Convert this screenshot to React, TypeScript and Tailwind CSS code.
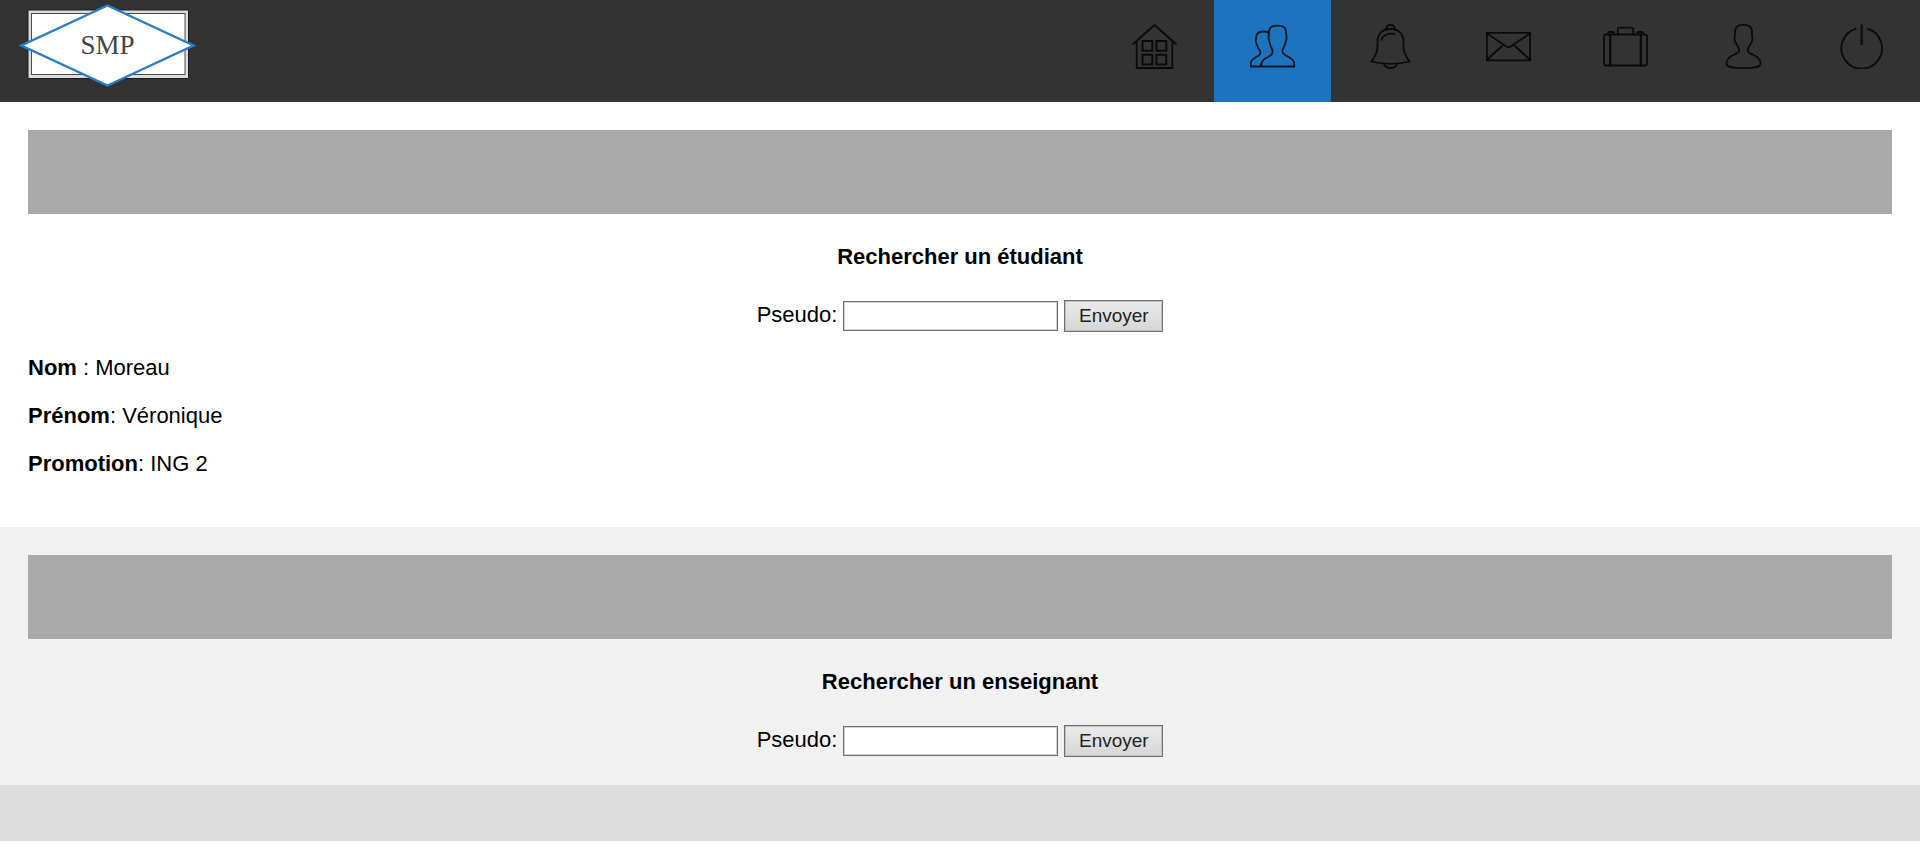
import type { ReactNode } from "react";

function Icon({ children }: { children: ReactNode }) {
  return (
    <svg
      viewBox="0 0 45 45"
      className="h-[45px] w-[45px]"
      fill="none"
      stroke="#000"
      strokeOpacity={0.8}
      strokeWidth={1.8}
      aria-hidden="true"
    >
      {children}
    </svg>
  );
}

const navItems: { label: string; active?: boolean; icon: ReactNode }[] = [
  {
    label: "Accueil",
    icon: (
      <Icon>
        <path d="M.5 20.5 22.5 1l22 19.5M4.7 17v27h35.6V17" />
        <path
          strokeWidth={2}
          d="M10.5 17h9.8v9.8h-9.8zM24.5 17h9.8v9.8h-9.8zM10.5 30.8h9.8v9.8h-9.8zM24.5 30.8h9.8v9.8h-9.8z"
        />
      </Icon>
    ),
  },
  {
    label: "Recherche",
    active: true,
    icon: (
      <Icon>
        <path d="M.8 42.300V39.500C.8 32.500 10.500 33.500 10.500 28.500c0-2.300-3.200-4-3.500-8-2-2.500-1-3-.6-8.500C6.900 8.500 10 7.500 14 7.500c2 0 3.800.3 5 1.500" />
        <path d="M11 42.300c0-10.300 11.700-8.300 11.700-14.300 0-4-3-5.500-3.200-10.500-1.700-2-.9-4-.5-10.500C19.400 2.500 23 1.700 27.500 1.700S35.600 2.500 36 7c.4 6.500 1.400 8.500-.3 10.500-.2 4.500-3.300 6-3.300 10 0 5 12 5 12 12.500v2.300" />
        <path d="M0 42.500h45" />
      </Icon>
    ),
  },
  {
    label: "Notifications",
    icon: (
      <Icon>
        <path d="M18.300 5C18.500 2 20 .8 22.500.8S26.500 2 26.700 5" />
        <path d="M3.300 37.500c4.200-5 6.200-8.500 6.200-15v-5C9.500 9 15.500 5 22.500 5s13 4 13 12.500v5c0 6.500 2 10 6.200 15-12 3-26.400 3-38.400 0z" />
        <path d="M16 40c1.500 5.300 11.500 5.300 13 0M13.300 16.700c.7-5.200 7-8.700 14-6.200" />
      </Icon>
    ),
  },
  {
    label: "Messages",
    icon: (
      <Icon>
        <path d="M.9 8.800h43.200v27.500H.9z" />
        <path d="m.7 9.300 20 13.500q1.800 1.200 3.600 0l20-13.500M.7 36l16.500-15M44.300 36 27.800 21" />
      </Icon>
    ),
  },
  {
    label: "Projets",
    icon: (
      <Icon>
        <rect x="1" y="10.500" width="43" height="31" rx="2" />
        <path d="M7.200 10.500v31M37.800 10.500v31" strokeWidth={2.200} />
        <path d="M14.800 10.500V6q0-2.300 2.300-2.300H28q2.300 0 2.300 2.300v4.500" />
        <path d="M5 9.300 5.800 8h4.400l.8 1.300M34 9.300l.8-1.300h4.400l.8 1.300" strokeWidth={2.200} />
      </Icon>
    ),
  },
  {
    label: "Profil",
    icon: (
      <Icon>
        <path d="M22.500.8c-5.500 0-8.300 2-8.500 6.700v4.300c-.8 2.700-1 4.500.5 6.200 1 3.500 3.700 4.500 3.700 8.500 0 4.500-12.700 4-12.700 13 0 3.500 5 4.700 17 4.700s17-1.200 17-4.700c0-9-12.700-8.500-12.700-13 0-4 2.700-5 3.700-8.500 1.500-1.700 1.300-3.500.5-6.200V7.500c-.2-4.700-3-6.700-8.500-6.700z" />
      </Icon>
    ),
  },
  {
    label: "Déconnexion",
    icon: (
      <Icon>
        <path d="M17.300 4.700a20.300 20.300 0 1 0 10.800 0" />
        <path d="M22.700.5V21" strokeWidth={2.800} strokeOpacity={0.6} />
      </Icon>
    ),
  },
];

function Logo() {
  return (
    <svg viewBox="0 0 180 88" className="h-[88px] w-[180px]" role="img" aria-label="SMP">
      <rect x="9" y="10" width="160.500" height="68.500" rx="1" fill="#dcdcdc" stroke="#1c1c1c" />
      <rect x="12.500" y="13.500" width="153.500" height="61" fill="#fff" stroke="#4c4c4c" />
      <path d="M88.500 5.500 174.500 45.500 88.500 85.500 2.500 45.500z" fill="#fff" stroke="#2a7fc4" strokeWidth={2.400} />
      <text
        x="88.500"
        y="54"
        textAnchor="middle"
        fontSize="27"
        fill="#444"
        fontFamily="'Liberation Serif', serif"
      >
        SMP
      </text>
    </svg>
  );
}

function Search({ id, title, className, children }: {
  id: string;
  title: string;
  className: string;
  children?: ReactNode;
}) {
  return (
    <section className={`p-7 ${className}`}>
      <div className="h-21 bg-[#aaa]" />
      <h2 className="mt-[29px] text-center font-bold">{title}</h2>
      <form
        className="mt-[29px] flex items-center justify-center gap-1.5"
        onSubmit={(event) => event.preventDefault()}
      >
        <label htmlFor={id} className="self-start leading-[30px]">
          Pseudo:
        </label>
        <input
          id={id}
          type="text"
          className="h-[30px] w-[215px] border border-[#6e6e6e] bg-white px-1 text-[19px] inset-shadow-[0_0_0_1px_#d0d0d0]"
        />
        <button
          type="submit"
          className="h-8 w-[99px] border border-[#707070] bg-linear-to-b from-[#ebebeb] to-[#d6d6d6] text-[19px] leading-7 text-[#222] inset-shadow-[0_0_0_1px_#c0c0c0]"
        >
          Envoyer
        </button>
      </form>
      {children}
    </section>
  );
}

export default function App() {
  return (
    <div className="bg-white font-['Liberation_Sans',Arial,sans-serif] text-[22px] leading-7 text-black">
      <header className="flex h-[102px] items-start justify-between bg-[#333] pl-[19px]">
        <a href="#accueil">
          <Logo />
        </a>
        <nav className="flex h-full w-[824px]">
          {navItems.map((item) => (
            <a
              key={item.label}
              href={`#${item.label.toLowerCase()}`}
              aria-label={item.label}
              className={`flex flex-1 justify-center pt-6 ${item.active ? "bg-[#1e73be]" : ""}`}
            >
              {item.icon}
            </a>
          ))}
        </nav>
      </header>
      <main>
        <Search id="etudiant" title="Rechercher un étudiant" className="bg-white">
          <div className="mt-[22px] mb-[21px] flex flex-col gap-5">
            <p>
              <b>Nom</b> : Moreau
            </p>
            <p>
              <b>Prénom</b>: Véronique
            </p>
            <p>
              <b>Promotion</b>: ING 2
            </p>
          </div>
        </Search>
        <Search id="enseignant" title="Rechercher un enseignant" className="bg-[#f1f1f1]" />
      </main>
      <footer className="h-14 bg-[#ddd]" />
    </div>
  );
}
